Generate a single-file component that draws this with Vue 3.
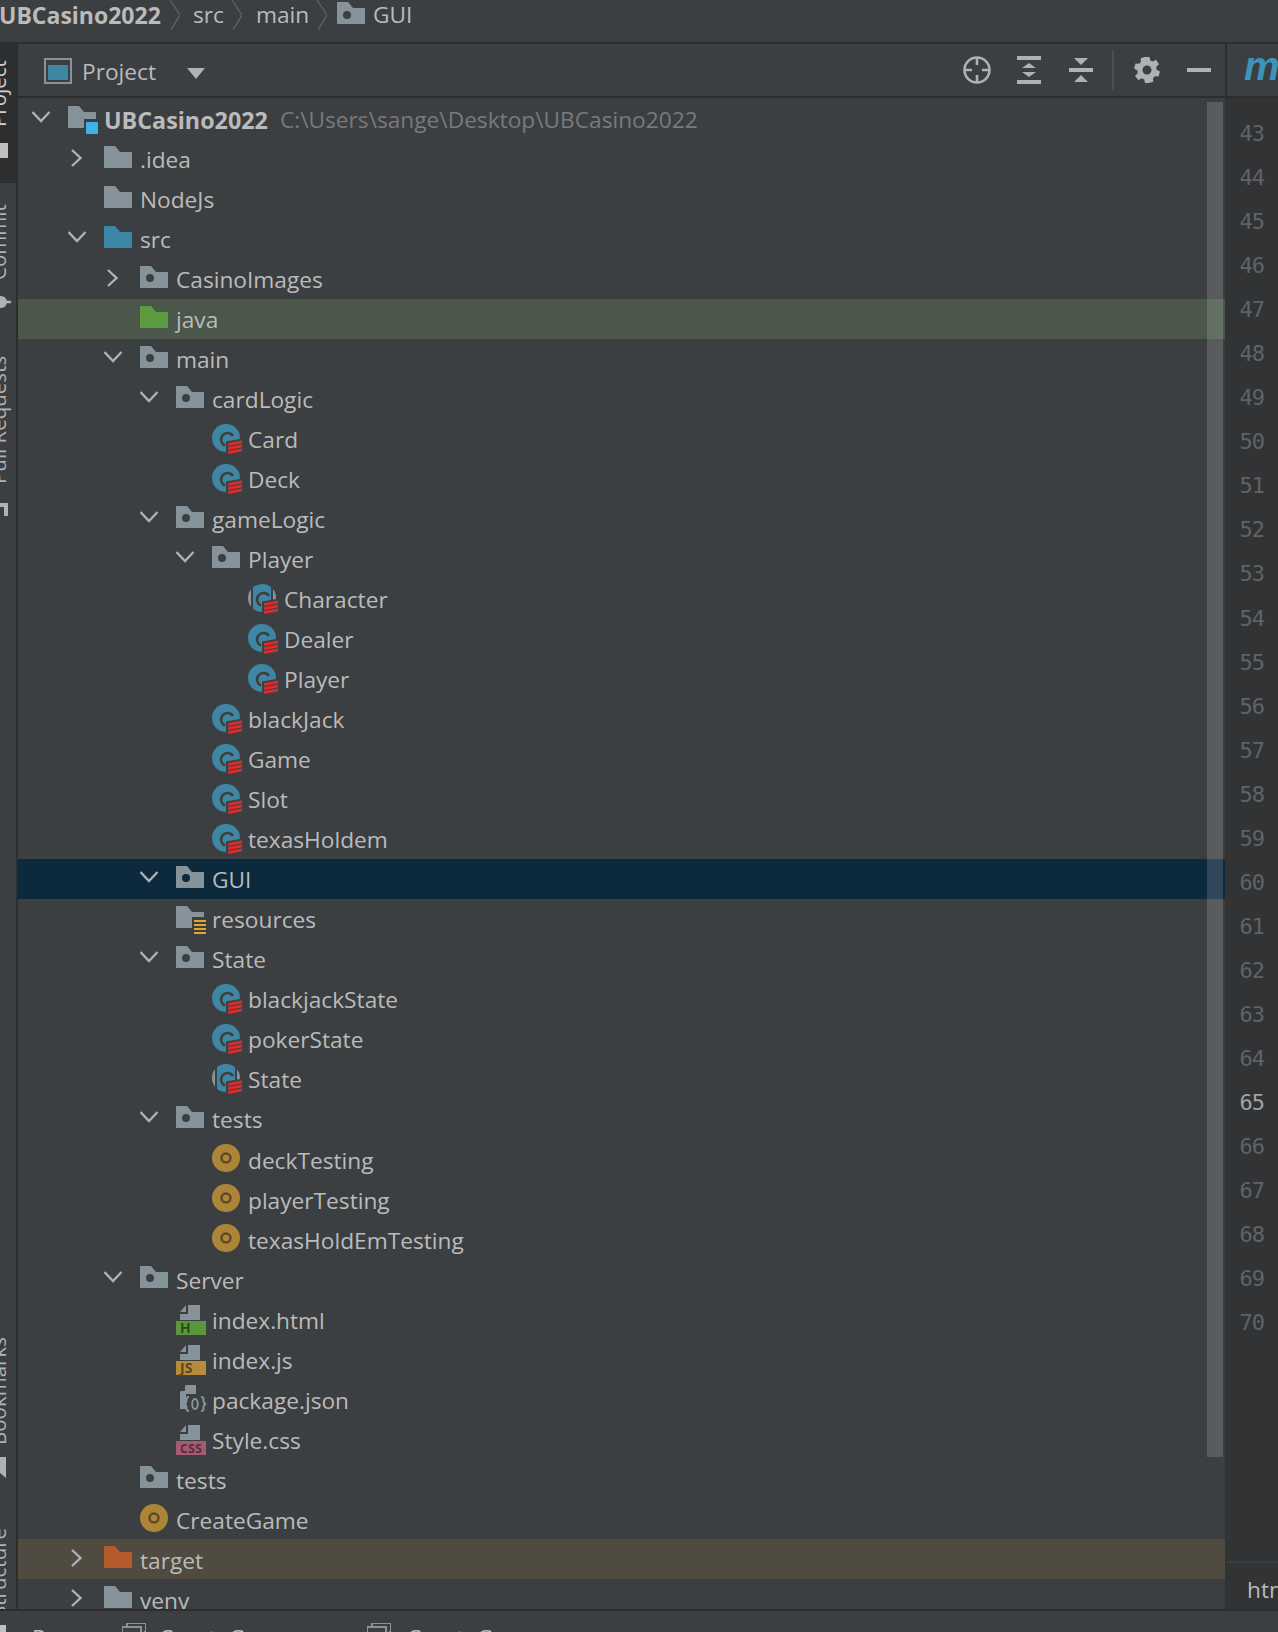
<script setup>
const r = (d, name, icon, chev = '', extra = '') => ({ d, name, icon, chev, cls: extra })
const rows = [
  r(0, 'UBCasino2022', 'module', 'down', 'root'),
  r(1, '.idea', 'folder', 'right'),
  r(1, 'NodeJs', 'folder'),
  r(1, 'src', 'src', 'down'),
  r(2, 'CasinoImages', 'pkg', 'right'),
  r(2, 'java', 'java', '', 'hl-green'),
  r(2, 'main', 'pkg', 'down'),
  r(3, 'cardLogic', 'pkg', 'down'),
  r(4, 'Card', 'cls'),
  r(4, 'Deck', 'cls'),
  r(3, 'gameLogic', 'pkg', 'down'),
  r(4, 'Player', 'pkg', 'down'),
  r(5, 'Character', 'abs'),
  r(5, 'Dealer', 'cls'),
  r(5, 'Player', 'cls'),
  r(4, 'blackJack', 'cls'),
  r(4, 'Game', 'cls'),
  r(4, 'Slot', 'cls'),
  r(4, 'texasHoldem', 'cls'),
  r(3, 'GUI', 'pkg', 'down', 'hl-sel'),
  r(3, 'resources', 'res'),
  r(3, 'State', 'pkg', 'down'),
  r(4, 'blackjackState', 'cls'),
  r(4, 'pokerState', 'cls'),
  r(4, 'State', 'abs'),
  r(3, 'tests', 'pkg', 'down'),
  r(4, 'deckTesting', 'test'),
  r(4, 'playerTesting', 'test'),
  r(4, 'texasHoldEmTesting', 'test'),
  r(2, 'Server', 'pkg', 'down'),
  r(3, 'index.html', 'html'),
  r(3, 'index.js', 'js'),
  r(3, 'package.json', 'json'),
  r(3, 'Style.css', 'css'),
  r(2, 'tests', 'pkg'),
  r(2, 'CreateGame', 'test'),
  r(1, 'target', 'target', 'right', 'hl-target'),
  r(1, 'venv', 'folder', 'right')
]
const lines = Array.from({ length: 28 }, (_, i) => 43 + i)
const folder = 'M0 7H11L16 13H28V29H0Z'
const badges = { html: ['H', '#5b963c'], js: ['JS', '#b88b38'], css: ['CSS', '#a35a72'] }
</script>

<template>
  <div class="ide">
    <header class="crumbs">
      <b class="crumb-root">UBCasino2022</b>
      <svg class="sep" width="10" height="30" viewBox="0 0 10 30"><path d="M0 0L10 15L1 30" /></svg>
      <span>src</span>
      <svg class="sep" width="10" height="30" viewBox="0 0 10 30"><path d="M0 0L10 15L1 30" /></svg>
      <span>main</span>
      <svg class="sep" width="10" height="30" viewBox="0 0 10 30"><path d="M0 0L10 15L1 30" /></svg>
      <svg class="crumb-folder" width="28" height="22" viewBox="0 0 28 22"><path d="M0 0H11L16 6H28V22H0Z" fill="#87939a" /><circle cx="10" cy="13" r="4" fill="#3c3f41" /></svg>
      <span>GUI</span>
    </header>

    <div class="middle">
      <aside class="strip">
        <div class="strip-active">
          <span class="vtext v-project">Project</span>
          <i class="strip-sq"></i>
        </div>
        <span class="vtext v-commit">Commit</span>
        <svg class="strip-commit" width="11" height="20" viewBox="0 0 11 20"><path d="M0 10H11" stroke="#afb1b3" stroke-width="2.5" /><circle cx="1" cy="10" r="6" fill="#afb1b3" /></svg>
        <span class="vtext v-pull">Pull Requests</span>
        <svg class="strip-pull" width="8" height="13" viewBox="0 0 8 13"><path d="M0 0H8V13H4V4H0Z" fill="#afb1b3" /></svg>
        <span class="vtext v-book">Bookmarks</span>
        <svg class="strip-book" width="6" height="21" viewBox="0 0 6 21"><path d="M0 0H6V21L0 16Z" fill="#afb1b3" /></svg>
        <span class="vtext v-struct">Structure</span>
      </aside>

      <section class="panel">
        <div class="panel-head">
          <svg class="proj-icon" width="28" height="26" viewBox="0 0 28 26"><rect x="1" y="1" width="26" height="24" fill="none" stroke="#87939a" stroke-width="2" /><rect x="4" y="7" width="20" height="15" fill="#3d87a5" /></svg>
          <span class="proj-label">Project</span>
          <svg class="proj-caret" width="18" height="11" viewBox="0 0 18 11"><path d="M0 0H18L9 11Z" fill="#afb1b3" /></svg>
          <div class="tools">
            <svg class="tool" width="28" height="28" viewBox="0 0 28 28"><g fill="none" stroke="#afb1b3" stroke-width="2.6"><circle cx="14" cy="14" r="12.5" /><path d="M14 1.500V9M14 19V26.500M1.500 14H9M19 14H26.500" /></g></svg>
            <svg class="tool t2" width="24" height="28" viewBox="0 0 24 28"><g fill="#afb1b3"><rect width="24" height="4" /><rect y="24" width="24" height="4" /><path d="M5 12L12 7L19 12ZM5 16H19L12 21Z" /></g></svg>
            <svg class="tool t3" width="24" height="26" viewBox="0 0 24 26"><g fill="#afb1b3"><rect y="11" width="24" height="4" /><path d="M5 1H19L12 8ZM12 18L19 25H5Z" /></g></svg>
            <i class="tool-div"></i>
            <svg class="tool t4" width="26" height="26" viewBox="0 0 26 26"><path fill="#afb1b3" fill-rule="evenodd" d="M10.500 0H15.500L16.300 3.500L18.800 4.600L22 2.800L25 7.200L22.300 9.700L22.300 12.500L26 14.500L24.500 19.500L20.800 19.200L19 21.200L19.300 24.800L15 26H11L10.200 22.500L7.600 21.300L4.500 23.200L1 19L3.700 16.300L3.500 13.500L0 11.500L1.500 6.500L5.200 6.800L7 4.800L6.700 1.200ZM13 8.500A4.500 4.500 0 1 0 13 17.500A4.500 4.500 0 1 0 13 8.500Z" /></svg>
            <i class="tool-min"></i>
          </div>
        </div>

        <div class="tree">
          <div v-for="(row, i) in rows" :key="i" class="row" :class="row.cls" :style="{ paddingLeft: 14 + 36 * row.d + 'px' }">
            <svg class="chev" width="36" height="40" viewBox="0 0 36 40">
              <path v-if="row.chev === 'down'" d="M0.500 13L9 22L17.500 13" />
              <path v-else-if="row.chev === 'right'" d="M4 11L12.500 19L4 27" />
            </svg>
            <svg class="ico" width="36" height="40" viewBox="0 0 36 40">
              <template v-if="row.icon === 'folder' || row.icon === 'src' || row.icon === 'java' || row.icon === 'target' || row.icon === 'pkg' || row.icon === 'res' || row.icon === 'module'">
                <path :d="folder" :fill="row.icon === 'src' ? '#3c87a6' : row.icon === 'java' ? '#5d9b3f' : row.icon === 'target' ? '#b35b2b' : '#87939a'" />
                <circle v-if="row.icon === 'pkg'" cx="10" cy="19" r="4" :fill="row.cls === 'hl-sel' ? '#0d293e' : '#3c3f41'" />
                <g v-if="row.icon === 'res'">
                  <rect x="16" y="18" width="15" height="18" fill="#3c3f41" />
                  <path d="M18 21H30V23H18ZM18 25H30V27H18ZM18 29H30V31H18ZM18 33H30V35H18Z" fill="#e0a82f" />
                </g>
                <g v-if="row.icon === 'module'">
                  <rect x="16" y="20" width="15" height="14" fill="#3c3f41" />
                  <rect x="18" y="23" width="12" height="12" fill="#3bb3e6" />
                </g>
              </template>
              <g v-else-if="row.icon === 'cls' || row.icon === 'abs'">
                <template v-if="row.icon === 'abs'">
                  <circle cx="14" cy="19" r="14" fill="#87939a" />
                  <rect x="3" y="5" width="22" height="28" fill="#3c3f41" />
                  <path d="M5 8.300A14 14 0 0 1 23 8.300V29.700A14 14 0 0 1 5 29.700Z" fill="#3d87a5" />
                </template>
                <circle v-else cx="14" cy="19" r="14" fill="#3d87a5" />
                <path d="M21 17A6.500 6.500 0 1 0 13 26.500" fill="none" stroke="#3c3f41" stroke-width="2.500" />
                <path d="M14 22.500L31 19.500V35H14Z" fill="#3c3f41" />
                <path d="M16 24L30 21.500V24.500L16 27ZM16 28L30 25.500V28.500L16 31ZM16 32L30 29.500V32.500L16 35Z" fill="#db2b2b" />
              </g>
              <g v-else-if="row.icon === 'test'">
                <circle cx="14" cy="19" r="14" fill="#ad8539" />
                <circle cx="14" cy="19" r="4.500" fill="none" stroke="#5f4a24" stroke-width="2.500" />
              </g>
              <g v-else-if="row.icon === 'json'">
                <path d="M4 13L10 6H20V30H4Z" fill="#87939a" />
                <path d="M3 12H9V5Z" fill="#3c3f41" />
                <rect x="10" y="15" width="20" height="20" fill="#3c3f41" />
                <path d="M13 18Q10 18 10.500 21.500Q10.500 24.500 8 25Q10.500 25.500 10.500 28.500Q10 32 13 32M25 18Q28 18 27.500 21.500Q27.500 24.500 30 25Q27.500 25.500 27.500 28.500Q28 32 25 32" fill="none" stroke="#87939a" stroke-width="2" />
                <ellipse cx="19" cy="25" rx="2.800" ry="5" fill="none" stroke="#87939a" stroke-width="2" />
              </g>
              <g v-else>
                <path d="M4 13L10 6V13ZM12 6H24V21H4V15H12Z" fill="#87939a" />
                <rect y="22" width="30" height="14" :fill="badges[row.icon][1]" />
                <text class="badge" :class="'b-' + row.icon" x="4" y="34">{{ badges[row.icon][0] }}</text>
              </g>
            </svg>
            <span class="label">{{ row.name }}</span>
            <span v-if="row.cls === 'root'" class="path">C:\Users\sange\Desktop\UBCasino2022</span>
          </div>
          <div class="scrollbar"></div>
        </div>
      </section>

      <aside class="right">
        <div class="tab-m"><span>m</span></div>
        <div class="gutter">
          <div v-for="n in lines" :key="n" class="ln" :class="{ cur: n === 65 }">{{ n }}</div>
        </div>
        <div class="htm">htm</div>
      </aside>
    </div>

    <footer class="bottom">
      <i class="b-sq"></i>
      <span class="b-run">Run:</span>
      <svg class="b-ico" width="24" height="9" viewBox="0 0 24 9"><path d="M0 9V4H19V9M5 3V0H24V9H22" fill="none" stroke="#87939a" stroke-width="2" /></svg>
      <span class="b-t1">CreateGame</span>
      <svg class="b-ico" width="24" height="9" viewBox="0 0 24 9"><path d="M0 9V4H19V9M5 3V0H24V9H22" fill="none" stroke="#87939a" stroke-width="2" /></svg>
      <span class="b-t2">CreateGame</span>
    </footer>
  </div>
</template>

<style scoped>
.ide {
  width: 1278px;
  height: 1632px;
  display: flex;
  flex-direction: column;
  overflow: hidden;
  background: #3c3f41;
  color: #bbbbbb;
  font-family: "Open Sans", "Noto Sans", sans-serif;
  font-size: 22.7px;
}
.crumbs {
  height: 42px;
  flex: none;
  display: flex;
  align-items: flex-start;
  border-bottom: 2px solid #2d2d2d;
  line-height: 30px;
}
.crumbs span { color: #bbbbbb; }
.crumb-root { margin-left: -1px; font-weight: 700; font-size: 23px; width: 171px; flex: none; }
.sep { flex: none; }
.sep path { fill: none; stroke: #5b5e60; stroke-width: 1.5; }
.crumbs span:nth-of-type(1) { margin: 0 10px 0 13px; width: 29px; }
.crumbs span:nth-of-type(2) { margin: 0 10px 0 14px; width: 51px; }
.crumb-folder { margin: 2px 8px 0 10px; flex: none; }

.middle { flex: 1; min-height: 0; display: flex; }
.strip {
  width: 16px;
  flex: none;
  border-right: 2px solid #2d2d2d;
  display: flex;
  flex-direction: column;
  align-items: flex-start;
  overflow: hidden;
  box-sizing: content-box;
  font-size: 20.5px;
}
.strip-active {
  width: 16px;
  height: 139px;
  flex: none;
  background: #2c2e2f;
  display: flex;
  flex-direction: column;
  align-items: flex-start;
}
.vtext {
  writing-mode: vertical-rl;
  transform: rotate(180deg);
  line-height: 30px;
  width: 30px;
  margin-left: -17px;
  flex: none;
  white-space: nowrap;
  color: #afb1b3;
}
.v-project { margin-top: 16px; height: 67px; color: #d0d0d0; }
.strip-sq { width: 8px; height: 15px; flex: none; margin-top: 16px; background: #c0c0c0; }
.v-commit { margin-top: 20px; height: 77px; }
.strip-commit { margin-top: 12px; flex: none; }
.v-pull { margin-top: 38px; height: 134px; }
.strip-pull { margin-top: 19px; flex: none; }
.v-book { margin-top: 822px; height: 107px; }
.strip-book { margin-top: 12px; flex: none; }
.v-struct { margin-top: 55px; height: 84px; }

.panel { flex: 1; min-width: 0; display: flex; flex-direction: column; }
.panel-head {
  height: 52px;
  flex: none;
  display: flex;
  align-items: center;
  padding-left: 26px;
  border-bottom: 2px solid #2d2d2d;
}
.proj-icon { flex: none; margin-top: 2px; }
.proj-label { margin-left: 10px; width: 105px; margin-top: 2px; }
.proj-caret { flex: none; margin-top: 6px; }
.tools { margin-left: auto; display: flex; align-items: center; margin-right: 14px; }
.tool { flex: none; display: block; }
.t2 { margin-left: 26px; }
.t3 { margin-left: 28px; }
.tool-div { width: 2px; height: 40px; background: #4b4d4f; margin-left: 19px; }
.t4 { margin-left: 20px; }
.tool-min { width: 24px; height: 4px; background: #afb1b3; margin-left: 27px; }

.tree { position: relative; flex: 1; min-height: 0; overflow: hidden; padding-top: 0.6px; }
.row {
  height: 40.02px;
  display: flex;
  align-items: center;
  white-space: nowrap;
}
.hl-green { background: #4a574a; }
.hl-sel { background: #0d293e; }
.hl-target { background: #4f4b41; }
.chev { flex: none; }
.chev path { fill: none; stroke: #afb1b3; stroke-width: 2.4; }
.ico { flex: none; overflow: visible; }
.label { margin-top: 2px; }
.root .label { font-weight: 700; font-size: 23.3px; }
.path { color: #787a7c; margin-left: 12px; margin-top: 2px; }
.badge { font-family: "Open Sans", sans-serif; font-weight: 700; font-size: 12px; fill: #33352f; }
.b-html { fill: #2c4a20; font-size: 14px; }
.b-js { fill: #5c4520; font-size: 14px; }
.b-css { fill: #5a2a3a; font-size: 12px; letter-spacing: 0.5px; }
.scrollbar {
  position: absolute;
  left: 1189px;
  top: 4px;
  width: 16px;
  height: 1355px;
  background: rgba(255, 255, 255, 0.15);
}

.right { width: 53px; flex: none; background: #313335; display: flex; flex-direction: column; overflow: hidden; }
.tab-m {
  height: 52px;
  flex: none;
  background: #3c3f41;
  border-left: 2px solid #2d2d2d;
  border-bottom: 2px solid #2d2d2d;
  padding-left: 17px;
  line-height: 46px;
}
.tab-m span { color: #3d93b8; font: italic 700 40px/44px "Liberation Sans", sans-serif; }
.gutter { flex: 1; min-height: 0; padding-top: 14px; }
.ln {
  height: 44.05px;
  line-height: 44px;
  width: 39px;
  text-align: right;
  font-family: "DejaVu Sans Mono", monospace;
  font-size: 22px;
  letter-spacing: -1px;
  color: #606366;
}
.ln.cur { color: #a4a3a3; }
.htm {
  height: 46px;
  flex: none;
  margin-left: 2px;
  border-top: 2px solid #3a3d3f;
  padding-left: 20px;
  line-height: 54px;
  color: #bbbbbb;
}

.bottom {
  height: 21px;
  flex: none;
  border-top: 2px solid #2d2d2d;
  overflow: hidden;
  display: flex;
  align-items: flex-start;
  line-height: 30px;
  white-space: nowrap;
}
.b-sq { width: 6px; height: 8px; background: #c0c0c0; flex: none; margin-top: 14px; }
.b-run { margin-left: 26px; width: 90px; flex: none; padding-top: 12px; }
.b-ico { flex: none; margin-top: 12px; }
.b-t1 { margin-left: 13px; width: 208px; flex: none; padding-top: 12px; }
.b-t2 { margin-left: 16px; padding-top: 12px; }
</style>
